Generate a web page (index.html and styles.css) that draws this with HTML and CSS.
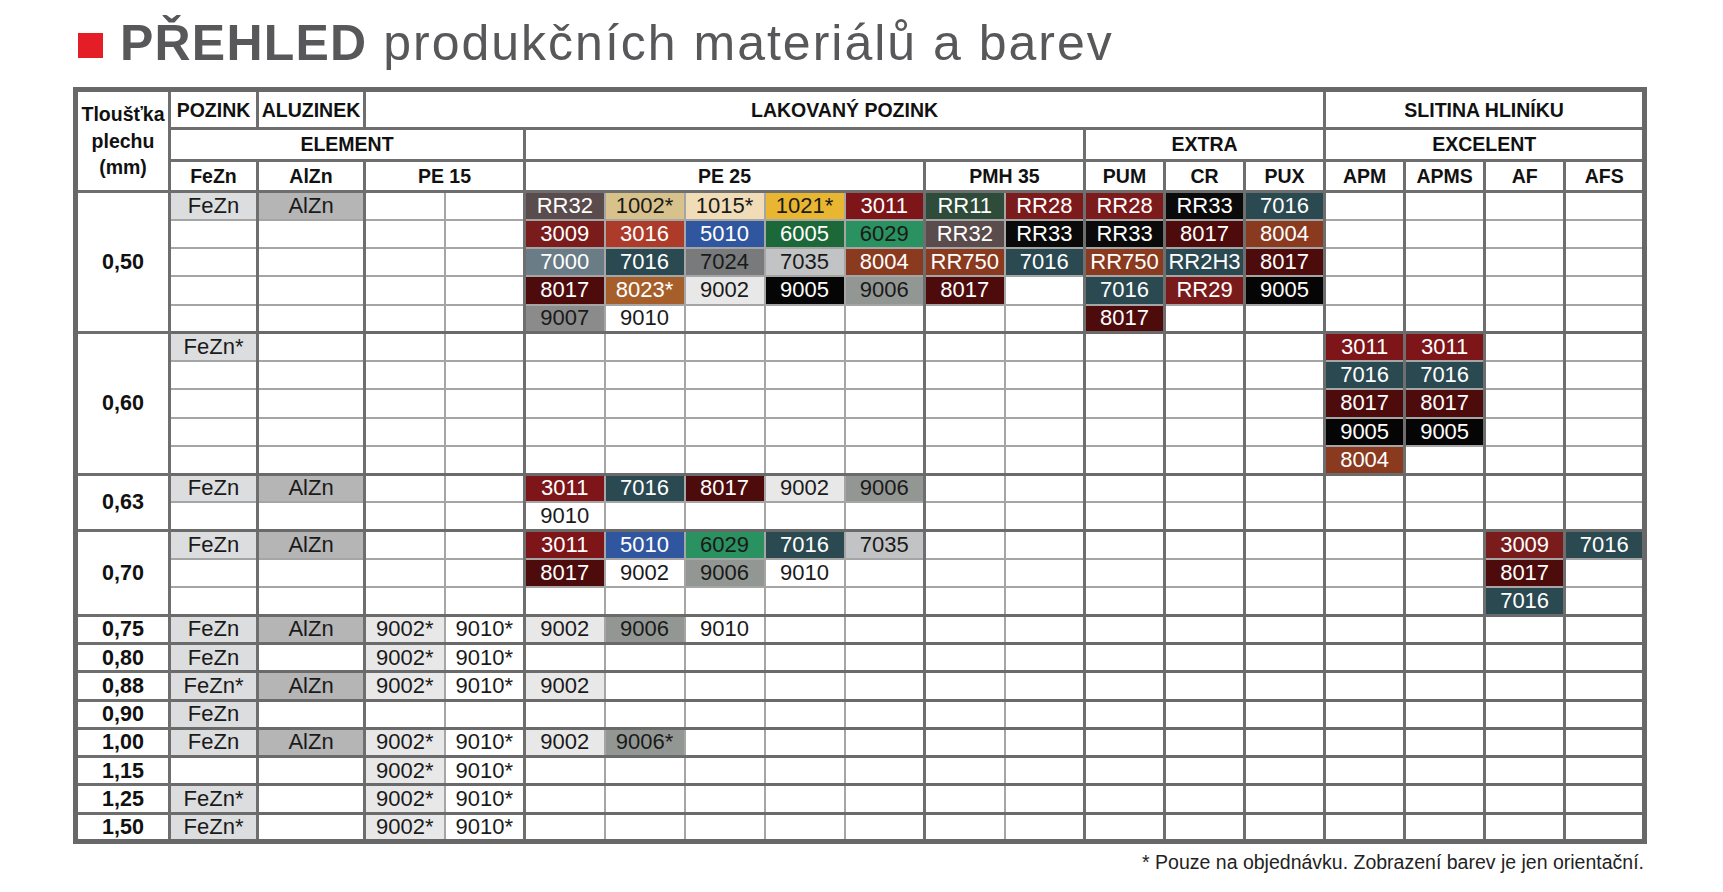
FILE: index.html
```html
<!DOCTYPE html>
<html lang="cs">
<head>
<meta charset="utf-8">
<title>Přehled produkčních materiálů a barev</title>
<link rel="stylesheet" href="styles.css">
</head>
<body>
<div class="page">
<h1 class="title"><span class="mark"></span><strong>PŘEHLED</strong> produkčních materiálů a barev</h1>
<table class="grid">
<colgroup>
<col class="c-label">
<col class="c-fezn g">
<col class="c-alzn g">
<col class="c-std g"><col class="c-std">
<col class="c-std g"><col class="c-std"><col class="c-std"><col class="c-std"><col class="c-std">
<col class="c-std g"><col class="c-std">
<col class="c-std g"><col class="c-std g"><col class="c-std g">
<col class="c-std g"><col class="c-std g"><col class="c-std g"><col class="c-std g">
</colgroup>
<thead>
<tr class="hr1">
<th rowspan="3" class="thk">Tloušťka<br>plechu<br>(mm)</th>
<th>POZINK</th>
<th>ALUZINEK</th>
<th colspan="12">LAKOVANÝ POZINK</th>
<th colspan="4">SLITINA HLINÍKU</th>
</tr>
<tr class="hr2">
<th colspan="4">ELEMENT</th>
<th colspan="7"></th>
<th colspan="3">EXTRA</th>
<th colspan="4">EXCELENT</th>
</tr>
<tr class="hr3">
<th>FeZn</th><th>AlZn</th><th colspan="2">PE 15</th><th colspan="5">PE 25</th><th colspan="2">PMH 35</th><th>PUM</th><th>CR</th><th>PUX</th><th>APM</th><th>APMS</th><th>AF</th><th>AFS</th>
</tr>
</thead>
<tbody>
<tr><td rowspan="5" class="lbl">0,50</td><td class="fe">FeZn</td><td class="al">AlZn</td><td></td><td></td><td class="k-rr32">RR32</td><td class="k-1002">1002*</td><td class="k-1015">1015*</td><td class="k-1021">1021*</td><td class="k-3011">3011</td><td class="k-rr11">RR11</td><td class="k-rr28">RR28</td><td class="k-rr28">RR28</td><td class="k-rr33">RR33</td><td class="k-7016">7016</td><td></td><td></td><td></td><td></td></tr>
<tr><td></td><td></td><td></td><td></td><td class="k-3009">3009</td><td class="k-3016">3016</td><td class="k-5010">5010</td><td class="k-6005">6005</td><td class="k-6029">6029</td><td class="k-rr32">RR32</td><td class="k-rr33">RR33</td><td class="k-rr33">RR33</td><td class="k-8017">8017</td><td class="k-8004">8004</td><td></td><td></td><td></td><td></td></tr>
<tr><td></td><td></td><td></td><td></td><td class="k-7000">7000</td><td class="k-7016">7016</td><td class="k-7024">7024</td><td class="k-7035">7035</td><td class="k-8004">8004</td><td class="k-rr750">RR750</td><td class="k-7016">7016</td><td class="k-rr750">RR750</td><td class="k-7016">RR2H3</td><td class="k-8017">8017</td><td></td><td></td><td></td><td></td></tr>
<tr><td></td><td></td><td></td><td></td><td class="k-8017">8017</td><td class="k-8023">8023*</td><td class="lg">9002</td><td class="k-9005">9005</td><td class="k-9006">9006</td><td class="k-8017">8017</td><td></td><td class="k-7016">7016</td><td class="k-rr29">RR29</td><td class="k-9005">9005</td><td></td><td></td><td></td><td></td></tr>
<tr><td></td><td></td><td></td><td></td><td class="k-9007">9007</td><td>9010</td><td></td><td></td><td></td><td></td><td></td><td class="k-8017">8017</td><td></td><td></td><td></td><td></td><td></td><td></td></tr>
</tbody>
<tbody>
<tr><td rowspan="5" class="lbl">0,60</td><td class="fe">FeZn*</td><td></td><td></td><td></td><td></td><td></td><td></td><td></td><td></td><td></td><td></td><td></td><td></td><td></td><td class="k-3011">3011</td><td class="k-3011">3011</td><td></td><td></td></tr>
<tr><td></td><td></td><td></td><td></td><td></td><td></td><td></td><td></td><td></td><td></td><td></td><td></td><td></td><td></td><td class="k-7016">7016</td><td class="k-7016">7016</td><td></td><td></td></tr>
<tr><td></td><td></td><td></td><td></td><td></td><td></td><td></td><td></td><td></td><td></td><td></td><td></td><td></td><td></td><td class="k-8017">8017</td><td class="k-8017">8017</td><td></td><td></td></tr>
<tr><td></td><td></td><td></td><td></td><td></td><td></td><td></td><td></td><td></td><td></td><td></td><td></td><td></td><td></td><td class="k-9005">9005</td><td class="k-9005">9005</td><td></td><td></td></tr>
<tr><td></td><td></td><td></td><td></td><td></td><td></td><td></td><td></td><td></td><td></td><td></td><td></td><td></td><td></td><td class="k-8004">8004</td><td></td><td></td><td></td></tr>
</tbody>
<tbody>
<tr><td rowspan="2" class="lbl">0,63</td><td class="fe">FeZn</td><td class="al">AlZn</td><td></td><td></td><td class="k-3011">3011</td><td class="k-7016">7016</td><td class="k-8017">8017</td><td class="lg">9002</td><td class="k-9006">9006</td><td></td><td></td><td></td><td></td><td></td><td></td><td></td><td></td><td></td></tr>
<tr><td></td><td></td><td></td><td></td><td>9010</td><td></td><td></td><td></td><td></td><td></td><td></td><td></td><td></td><td></td><td></td><td></td><td></td><td></td></tr>
</tbody>
<tbody>
<tr><td rowspan="3" class="lbl">0,70</td><td class="fe">FeZn</td><td class="al">AlZn</td><td></td><td></td><td class="k-3011">3011</td><td class="k-5010">5010</td><td class="k-6029">6029</td><td class="k-7016">7016</td><td class="k-7035">7035</td><td></td><td></td><td></td><td></td><td></td><td></td><td></td><td class="k-3009">3009</td><td class="k-7016">7016</td></tr>
<tr><td></td><td></td><td></td><td></td><td class="k-8017">8017</td><td>9002</td><td class="k-9006">9006</td><td>9010</td><td></td><td></td><td></td><td></td><td></td><td></td><td></td><td></td><td class="k-8017">8017</td><td></td></tr>
<tr><td></td><td></td><td></td><td></td><td></td><td></td><td></td><td></td><td></td><td></td><td></td><td></td><td></td><td></td><td></td><td></td><td class="k-7016">7016</td><td></td></tr>
</tbody>
<tbody>
<tr><td class="lbl">0,75</td><td class="fe">FeZn</td><td class="al">AlZn</td><td class="lg">9002*</td><td>9010*</td><td class="lg">9002</td><td class="k-9006">9006</td><td>9010</td><td></td><td></td><td></td><td></td><td></td><td></td><td></td><td></td><td></td><td></td><td></td></tr>
</tbody>
<tbody>
<tr><td class="lbl">0,80</td><td class="fe">FeZn</td><td></td><td class="lg">9002*</td><td>9010*</td><td></td><td></td><td></td><td></td><td></td><td></td><td></td><td></td><td></td><td></td><td></td><td></td><td></td><td></td></tr>
</tbody>
<tbody>
<tr><td class="lbl">0,88</td><td class="fe">FeZn*</td><td class="al">AlZn</td><td class="lg">9002*</td><td>9010*</td><td class="lg">9002</td><td></td><td></td><td></td><td></td><td></td><td></td><td></td><td></td><td></td><td></td><td></td><td></td><td></td></tr>
</tbody>
<tbody>
<tr><td class="lbl">0,90</td><td class="fe">FeZn</td><td></td><td></td><td></td><td></td><td></td><td></td><td></td><td></td><td></td><td></td><td></td><td></td><td></td><td></td><td></td><td></td><td></td></tr>
</tbody>
<tbody>
<tr><td class="lbl">1,00</td><td class="fe">FeZn</td><td class="al">AlZn</td><td class="lg">9002*</td><td>9010*</td><td class="lg">9002</td><td class="k-9006">9006*</td><td></td><td></td><td></td><td></td><td></td><td></td><td></td><td></td><td></td><td></td><td></td><td></td></tr>
</tbody>
<tbody>
<tr><td class="lbl">1,15</td><td></td><td></td><td class="lg">9002*</td><td>9010*</td><td></td><td></td><td></td><td></td><td></td><td></td><td></td><td></td><td></td><td></td><td></td><td></td><td></td><td></td></tr>
</tbody>
<tbody>
<tr><td class="lbl">1,25</td><td class="fe">FeZn*</td><td></td><td class="lg">9002*</td><td>9010*</td><td></td><td></td><td></td><td></td><td></td><td></td><td></td><td></td><td></td><td></td><td></td><td></td><td></td><td></td></tr>
</tbody>
<tbody>
<tr><td class="lbl">1,50</td><td class="fe">FeZn*</td><td></td><td class="lg">9002*</td><td>9010*</td><td></td><td></td><td></td><td></td><td></td><td></td><td></td><td></td><td></td><td></td><td></td><td></td><td></td><td></td></tr>
</tbody>
</table>
<p class="note">* Pouze na objednávku. Zobrazení barev je jen orientační.</p>
</div>
</body>
</html>
```

FILE: styles.css
```css
* { box-sizing: border-box; }

body {
  margin: 0;
  background: #ffffff;
  font-family: "Liberation Sans", Arial, sans-serif;
  color: #111111;
}

.page {
  padding: 16px 0 0 73px;
}

.title {
  margin: 0 0 0 5px;
  height: 54px;
  line-height: 54px;
  font-size: 50px;
  font-weight: 400;
  letter-spacing: 2px;
  color: #58585a;
  white-space: nowrap;
}

.title .mark {
  display: inline-block;
  width: 25px;
  height: 25px;
  margin-right: 17px;
  background: #e41d26;
  vertical-align: 2px;
}

.title strong {
  font-weight: 700;
  letter-spacing: 1.2px;
}

.grid {
  margin-top: 17px;
  width: 1574px;
  table-layout: fixed;
  border-collapse: collapse;
  border: 5px solid #686868;
}

.grid col.c-label { width: 94px; }
.grid col.c-fezn { width: 88px; }
.grid col.c-alzn { width: 107px; }
.grid col.c-std { width: 80px; }
.grid col.g { border-left: 3px solid #6e6e6e; }

.grid thead { border-bottom: 3px solid #666666; }
.grid tbody { border-top: 3px solid #6a6a6a; }

.grid th,
.grid td {
  padding: 0;
  text-align: center;
  vertical-align: middle;
  white-space: nowrap;
  overflow: hidden;
}

.grid th {
  border: 3px solid #6e6e6e;
  font-size: 19.5px;
  font-weight: 700;
  line-height: 22px;
  color: #111111;
}

.grid th.thk {
  line-height: 26.5px;
}

.hr1 { height: 39px; }
.hr2 { height: 31.5px; }
.hr3 { height: 31.5px; }

.grid tbody tr { height: 28.25px; }

.grid td {
  border: 2px solid #a5a5a5;
  font-size: 22px;
  line-height: 22px;
  color: #1a1a1a;
}

.grid td.lbl {
  border: 3px solid #6e6e6e;
  font-size: 21.5px;
  font-weight: 700;
  color: #111111;
}

.fe { background: #dcdddf; }
.al { background: #b5b5b5; }
.lg { background: #e8e8e8; }

.k-rr32 { background: #5a4c4c; color: #fff !important; }
.k-1002 { background: #d8c28b; }
.k-1015 { background: #f0dcb6; }
.k-1021 { background: #e8b630; }
.k-3011 { background: #7e1519; color: #fff !important; }
.k-3009 { background: #7a1c1c; color: #fff !important; }
.k-3016 { background: #ad3b2a; color: #fff !important; }
.k-5010 { background: #3156a0; color: #fff !important; }
.k-6005 { background: #1c6839; color: #fff !important; }
.k-6029 { background: #2a9160; }
.k-7000 { background: #6a7c86; color: #fff !important; }
.k-7016 { background: #2a4950; color: #fff !important; }
.k-7024 { background: #787a7c; }
.k-7035 { background: #c1c3c5; }
.k-8004 { background: #8a3a1e; color: #fff !important; }
.k-8017 { background: #4e0b0b; color: #fff !important; }
.k-8023 { background: #a65f2b; color: #fff !important; }
.k-9005 { background: #050505; color: #fff !important; }
.k-9006 { background: #939793; }
.k-9007 { background: #8b8b8b; }
.k-rr11 { background: #2f4b3a; color: #fff !important; }
.k-rr28 { background: #7b1b1c; color: #fff !important; }
.k-rr33 { background: #0a0a0a; color: #fff !important; }
.k-rr750 { background: #8a3a1e; color: #fff !important; }
.k-rr29 { background: #7a1b1b; color: #fff !important; }

.note {
  width: 1574px;
  margin: 5px 0 0 0;
  padding-right: 3px;
  text-align: right;
  font-size: 19.5px;
  line-height: 26px;
  color: #222222;
}
```
